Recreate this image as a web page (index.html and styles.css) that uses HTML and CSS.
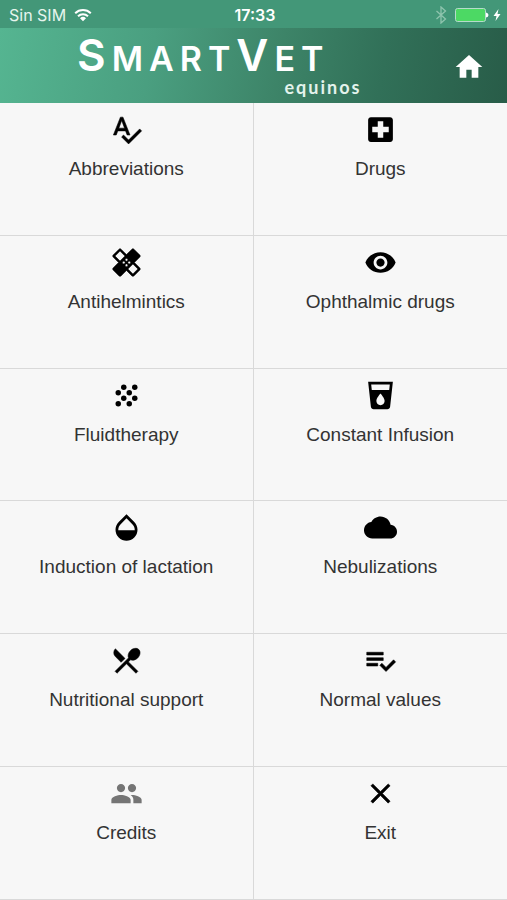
FILE: index.html
```html
<!DOCTYPE html>
<html lang="en">
<head>
    <meta charset="UTF-8">
    <meta name="viewport" content="width=device-width, initial-scale=1.0">
    <title>SmartVet equinos</title>
    <link rel="stylesheet" href="styles.css">
</head>
<body>
    <div class="status-bar">
        <div class="carrier">
            <span>Sin SIM</span>
            <svg class="wifi" viewBox="0 0 18 14" aria-hidden="true">
                <path d="M1.2 5.2a11.2 11.2 0 0 1 15.6 0M4 8.2a7.2 7.2 0 0 1 10 0" fill="none" stroke="currentColor" stroke-width="2"/>
                <path d="M9 13.2l-3-3a4.3 4.3 0 0 1 6 0z" fill="currentColor"/>
            </svg>
        </div>
        <time class="clock">17:33</time>
        <div class="indicators">
            <svg class="bluetooth" viewBox="0 0 12 18" aria-hidden="true">
                <path d="M1.5 5l9 8L6 17V1l4.500 4-9 8" fill="none" stroke="currentColor" stroke-width="1.300"/>
            </svg>
            <svg class="battery" viewBox="0 0 34 14" aria-hidden="true">
                <rect x=".5" y=".5" width="30" height="13" rx="2" fill="#4cd964" stroke="#b5dccb"/>
                <path d="M31 4.500q2.500.5 2.500 2.500t-2.500 2.500z" fill="#fff"/>
            </svg>
            <svg class="bolt" viewBox="0 0 8 12" aria-hidden="true">
                <path d="M5.500 0L.5 7h3L2.500 12 7.500 5h-3z" fill="currentColor"/>
            </svg>
        </div>
    </div>

    <header class="header">
        <h1 class="logo">
            <span class="logo-name"><span class="big">S</span>MART<span class="big">V</span>ET</span>
            <span class="logo-sub">equinos</span>
        </h1>
        <a class="home" href="#" aria-label="Home">
            <svg viewBox="0 0 24 24"><path d="M10 20v-6h4v6h5v-8h3L12 3 2 12h3v8z"/></svg>
        </a>
    </header>

    <nav class="menu">
        <a class="item" href="#">
            <svg class="icon bold" viewBox="0 0 24 24"><path d="M12.450 16h2.090L9.430 3H7.570L2.460 16h2.090l1.120-3h5.640l1.140 3zm-6.020-5L8.500 5.480 10.570 11H6.430zm15.160.590l-8.090 8.090L9.830 16l-1.410 1.410 5.090 5.090L23 13l-1.410-1.410z"/></svg>
            <span>Abbreviations</span>
        </a>
        <a class="item" href="#">
            <svg class="icon" viewBox="0 0 24 24"><path d="M19 3H5c-1.100 0-1.990.9-1.990 2L3 19c0 1.100.9 2 2 2h14c1.100 0 2-.9 2-2V5c0-1.100-.9-2-2-2zm-1 11h-4v4h-4v-4H6v-4h4V6h4v4h4v4z"/></svg>
            <span>Drugs</span>
        </a>
        <a class="item" href="#">
            <svg class="icon bold" viewBox="0 0 24 24"><path d="M17.730 12.020l3.980-3.980c.39-.39.39-1.020 0-1.410l-4.340-4.340c-.39-.39-1.020-.39-1.410 0l-3.980 3.980L8 2.290C7.800 2.100 7.550 2 7.290 2c-.25 0-.51.1-.7.290L2.250 6.630c-.39.39-.39 1.020 0 1.410l3.980 3.980L2.250 16c-.39.39-.39 1.020 0 1.410l4.340 4.340c.39.39 1.020.39 1.410 0l3.980-3.980 3.980 3.980c.2.2.45.29.71.29.26 0 .51-.1.71-.29l4.340-4.340c.39-.39.39-1.020 0-1.410l-3.990-3.980zM12 9c.55 0 1 .45 1 1s-.45 1-1 1-1-.45-1-1 .45-1 1-1zm-4.710 1.960L3.660 7.340l3.630-3.630 3.620 3.620-3.620 3.630zM10 13c-.55 0-1-.45-1-1s.45-1 1-1 1 .45 1 1-.45 1-1 1zm2 2c-.55 0-1-.45-1-1s.45-1 1-1 1 .45 1 1-.45 1-1 1zm2-4c.55 0 1 .45 1 1s-.45 1-1 1-1-.45-1-1 .45-1 1-1zm2.660 9.340l-3.630-3.620 3.630-3.630 3.620 3.620-3.620 3.630z"/></svg>
            <span>Antihelmintics</span>
        </a>
        <a class="item" href="#">
            <svg class="icon" viewBox="0 0 24 24"><path d="M12 4.500C7 4.500 2.730 7.610 1 12c1.730 4.390 6 7.500 11 7.500s9.270-3.110 11-7.500c-1.730-4.390-6-7.500-11-7.500zM12 17c-2.760 0-5-2.240-5-5s2.240-5 5-5 5 2.240 5 5-2.240 5-5 5zm0-8c-1.660 0-3 1.340-3 3s1.340 3 3 3 3-1.340 3-3-1.340-3-3-3z"/></svg>
            <span>Ophthalmic drugs</span>
        </a>
        <a class="item" href="#">
            <svg class="icon" viewBox="0 0 24 24">
                <circle cx="10" cy="6" r="2"/><circle cx="18" cy="6" r="2"/>
                <circle cx="6" cy="10" r="2"/><circle cx="14" cy="10" r="2"/>
                <circle cx="10" cy="14" r="2"/><circle cx="18" cy="14" r="2"/>
                <circle cx="6" cy="18" r="2"/><circle cx="14" cy="18" r="2"/>
            </svg>
            <span>Fluidtherapy</span>
        </a>
        <a class="item" href="#">
            <svg class="icon" viewBox="0 0 24 24"><path d="M3 2l2.010 18.230C5.130 21.230 5.970 22 7 22h10c1.030 0 1.870-.77 1.990-1.770L21 2H3zm9 17c-1.660 0-3-1.340-3-3 0-2 3-5.400 3-5.400s3 3.400 3 5.400c0 1.660-1.340 3-3 3zm6.330-11H5.670l-.44-4h13.530l-.43 4z"/></svg>
            <span>Constant Infusion</span>
        </a>
        <a class="item" href="#">
            <svg class="icon" viewBox="0 0 24 24"><path d="M17.660 8L12 2.350 6.340 8C4.780 9.560 4 11.640 4 13.640s.78 4.110 2.340 5.670 3.610 2.350 5.660 2.350 4.100-.79 5.660-2.350S20 15.640 20 13.640 19.220 9.560 17.660 8zM6 14c.01-2 .62-3.270 1.760-4.400L12 5.270l4.240 4.380C17.380 10.770 17.990 12 18 14H6z"/></svg>
            <span>Induction of lactation</span>
        </a>
        <a class="item" href="#">
            <svg class="icon" viewBox="0 0 24 24"><path d="M19.350 10.040C18.670 6.590 15.640 4 12 4 9.110 4 6.600 5.640 5.350 8.040 2.340 8.360 0 10.910 0 14c0 3.310 2.690 6 6 6h13c2.760 0 5-2.240 5-5 0-2.640-2.050-4.780-4.650-4.960z"/></svg>
            <span>Nebulizations</span>
        </a>
        <a class="item" href="#">
            <svg class="icon bold" viewBox="0 0 24 24"><path d="M8.100 13.340l2.830-2.830L3.910 3.500c-1.560 1.560-1.560 4.090 0 5.660l4.190 4.180zm6.780-1.810c1.530.71 3.680.21 5.270-1.380 1.910-1.910 2.280-4.650.81-6.120-1.460-1.460-4.200-1.100-6.120.81-1.590 1.590-2.090 3.740-1.380 5.270L3.700 19.870l1.410 1.410L12 14.410l6.880 6.880 1.410-1.410L13.410 13l1.470-1.470z"/></svg>
            <span>Nutritional support</span>
        </a>
        <a class="item" href="#">
            <svg class="icon bold" viewBox="0 0 24 24"><path d="M14 10H2v2h12v-2zm0-4H2v2h12V6zM2 16h8v-2H2v2zm19.500-4.500L23 13l-6.990 7-4.510-4.500L13 14l3.010 3 5.490-5.500z"/></svg>
            <span>Normal values</span>
        </a>
        <a class="item" href="#">
            <svg class="icon muted" viewBox="0 0 24 24"><path d="M16 11c1.660 0 2.990-1.340 2.990-3S17.660 5 16 5c-1.660 0-3 1.340-3 3s1.340 3 3 3zm-8 0c1.660 0 2.990-1.340 2.990-3S9.660 5 8 5C6.340 5 5 6.340 5 8s1.340 3 3 3zm0 2c-2.330 0-7 1.170-7 3.500V19h14v-2.500c0-2.330-4.670-3.500-7-3.500zm8 0c-.29 0-.62.020-.97.050 1.160.84 1.970 1.970 1.970 3.450V19h6v-2.500c0-2.330-4.670-3.500-7-3.500z"/></svg>
            <span>Credits</span>
        </a>
        <a class="item" href="#">
            <svg class="icon bold" viewBox="0 0 24 24"><path d="M19 6.410L17.590 5 12 10.590 6.410 5 5 6.410 10.590 12 5 17.590 6.410 19 12 13.410 17.590 19 19 17.590 13.410 12z"/></svg>
            <span>Exit</span>
        </a>
    </nav>
</body>
</html>
```
FILE: styles.css
```css
* {
    margin: 0;
    padding: 0;
    box-sizing: border-box;
}

body {
    font-family: "Liberation Sans", Arial, sans-serif;
    background: #f7f7f7;
    color: #333;
    min-height: 100vh;
    display: flex;
    flex-direction: column;
}

/* status bar */
.status-bar {
    display: grid;
    grid-template-columns: 1fr auto 1fr;
    align-items: center;
    height: 28px;
    padding: 2px 6px 0 9px;
    background: #439778;
    color: #fff;
    font-family: Inter, sans-serif;
    font-size: 16px;
}

.carrier,
.indicators {
    display: flex;
    align-items: center;
    gap: 8px;
}

.carrier {
    color: #e6f5ee;
}

.indicators {
    justify-content: flex-end;
}

.clock {
    font-weight: 600;
}

.wifi {
    width: 18px;
    height: 14px;
    color: #fff;
}

.bluetooth {
    width: 12px;
    height: 18px;
    color: #8fc4ae;
}

.battery {
    width: 34px;
    height: 14px;
}

.bolt {
    width: 8px;
    height: 12px;
    margin-left: -4px;
}

/* header */
.header {
    display: flex;
    align-items: center;
    justify-content: space-between;
    height: 75px;
    padding: 2px 22px 0 77px;
    background: linear-gradient(100deg, #55b591 0%, #4a9f80 30%, #3d8468 55%, #317058 75%, #285c48 100%);
    color: #fff;
}

.logo {
    display: flex;
    flex-direction: column;
    font-family: Inter, sans-serif;
    font-weight: 600;
}

.logo-name {
    font-size: 34px;
    line-height: 36px;
    letter-spacing: 6px;
}

.logo-name .big {
    font-size: 44px;
}

.logo-sub {
    align-self: flex-end;
    margin-right: -32px;
    font-family: Lato, sans-serif;
    font-size: 18px;
    font-weight: 700;
    line-height: 20px;
    letter-spacing: 2px;
    color: #e3f3ec;
}

.home svg {
    display: block;
    width: 32px;
    height: 32px;
    fill: #fff;
}

/* menu */
.menu {
    flex: 1;
    display: grid;
    grid-template-columns: 1fr 1fr;
    grid-auto-rows: 1fr;
}

.item {
    display: flex;
    flex-direction: column;
    align-items: center;
    gap: 12px;
    padding: 10px 8px;
    border-bottom: 1px solid #d9d9d9;
    color: inherit;
    font-size: 19px;
    line-height: 22px;
    text-decoration: none;
}

.item:nth-child(odd) {
    border-right: 1px solid #d9d9d9;
}

.icon {
    width: 33px;
    height: 33px;
    fill: #000;
}

.icon.bold {
    stroke: #000;
    stroke-width: .4;
}

.icon.muted {
    fill: #757575;
}
```
